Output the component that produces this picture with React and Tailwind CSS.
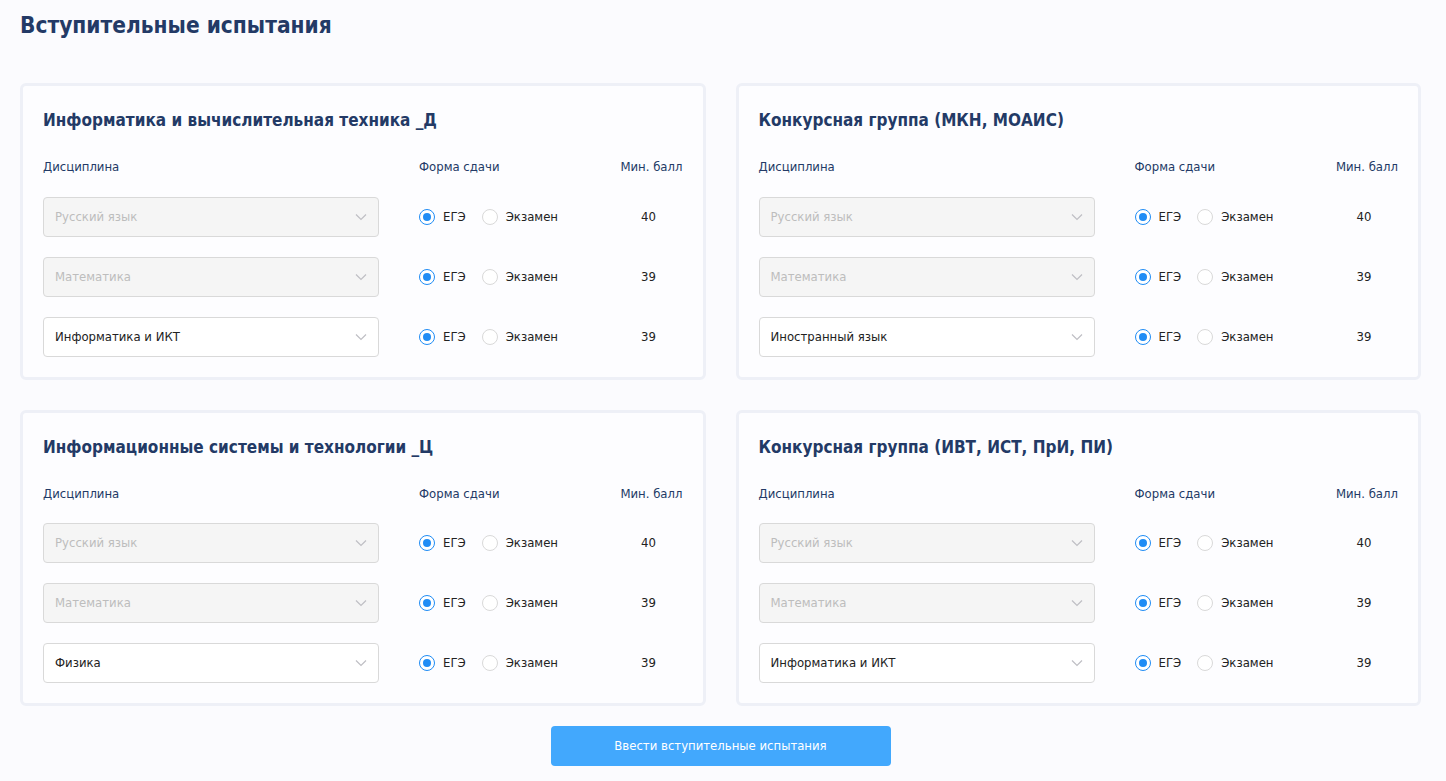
import React from "react";

const groups = [
  {
    title: "Информатика и вычислительная техника _Д",
    rows: [
      { name: "Русский язык", locked: true, score: 40 },
      { name: "Математика", locked: true, score: 39 },
      { name: "Информатика и ИКТ", locked: false, score: 39 },
    ],
  },
  {
    title: "Конкурсная группа (МКН, МОАИС)",
    rows: [
      { name: "Русский язык", locked: true, score: 40 },
      { name: "Математика", locked: true, score: 39 },
      { name: "Иностранный язык", locked: false, score: 39 },
    ],
  },
  {
    title: "Информационные системы и технологии _Ц",
    rows: [
      { name: "Русский язык", locked: true, score: 40 },
      { name: "Математика", locked: true, score: 39 },
      { name: "Физика", locked: false, score: 39 },
    ],
  },
  {
    title: "Конкурсная группа (ИВТ, ИСТ, ПрИ, ПИ)",
    rows: [
      { name: "Русский язык", locked: true, score: 40 },
      { name: "Математика", locked: true, score: 39 },
      { name: "Информатика и ИКТ", locked: false, score: 39 },
    ],
  },
];

const Chevron = () => (
  <svg width="12" height="8" viewBox="0 0 12 8" fill="none">
    <path d="M1 1.5 L6 6.5 L11 1.5" stroke="#bfbfc4" strokeWidth="1.2" />
  </svg>
);

const Radio = ({ checked, label }) => (
  <div className="flex items-center gap-[8px]">
    {checked ? (
      <span className="w-[16px] h-[16px] rounded-full border border-[#1f8cf5] flex items-center justify-center bg-white">
        <span className="w-[8px] h-[8px] rounded-full bg-[#1f8cf5]" />
      </span>
    ) : (
      <span className="w-[16px] h-[16px] rounded-full border border-[#d9d9d9] bg-white" />
    )}
    <span className="text-[13px] text-[#222]">{label}</span>
  </div>
);

const Row = ({ row }) => (
  <div className="flex items-center h-[40px]">
    <div
      className={`w-[336px] h-[40px] rounded-[4px] border border-[#d9d9d9] flex items-center justify-between pl-[11px] pr-[11px] ${
        row.locked ? "bg-[#f5f5f5]" : "bg-white"
      }`}
    >
      <span
        className={`text-[13px] ${row.locked ? "text-[#bdbdbd]" : "text-[#222]"}`}
      >
        {row.name}
      </span>
      <Chevron />
    </div>

    <div className="ml-[40px] flex items-center gap-[16px]">
      <Radio checked label="ЕГЭ" />
      <Radio label="Экзамен" />
    </div>

    <div className="ml-auto w-[68px] text-center text-[13px] text-[#222]">
      {row.score}
    </div>
  </div>
);

const Card = ({ group }) => (
  <div className="bg-[#fdfdff] border-[3px] border-[#eef0f7] rounded-[6px] pt-[20px] px-[20px] pb-[20px]">
    <h2 className="text-[17px] font-bold text-[#233a66] leading-[28px]">
      {group.title}
    </h2>

    <div className="flex items-center mt-[23px] text-[13px] text-[#233a66]">
      <span className="w-[376px]">Дисциплина</span>
      <span>Форма сдачи</span>
      <span className="ml-auto">Мин. балл</span>
    </div>

    <div className="mt-[20px] flex flex-col gap-[20px]">
      {group.rows.map((r, i) => (
        <Row key={i} row={r} />
      ))}
    </div>
  </div>
);

export default function App() {
  return (
    <div
      className="min-h-screen bg-[#fbfbfe] px-[20px] pt-[10px]"
      style={{ fontFamily: "'DejaVu Sans Condensed', 'DejaVu Sans', sans-serif" }}
    >
      <h1 className="text-[22.5px] font-bold text-[#233a66] leading-[30px]">
        Вступительные испытания
      </h1>

      <div className="mt-[43px] grid grid-cols-2 gap-x-[30px] gap-y-[30px] w-[1401px]">
        {groups.map((g, i) => (
          <Card key={i} group={g} />
        ))}
      </div>

      <div className="flex justify-center mt-[20px] pr-[5px]">
        <button className="w-[340px] h-[40px] rounded-[4px] bg-[#42a8fd] text-white text-[13px]">
          Ввести вступительные испытания
        </button>
      </div>
    </div>
  );
}
